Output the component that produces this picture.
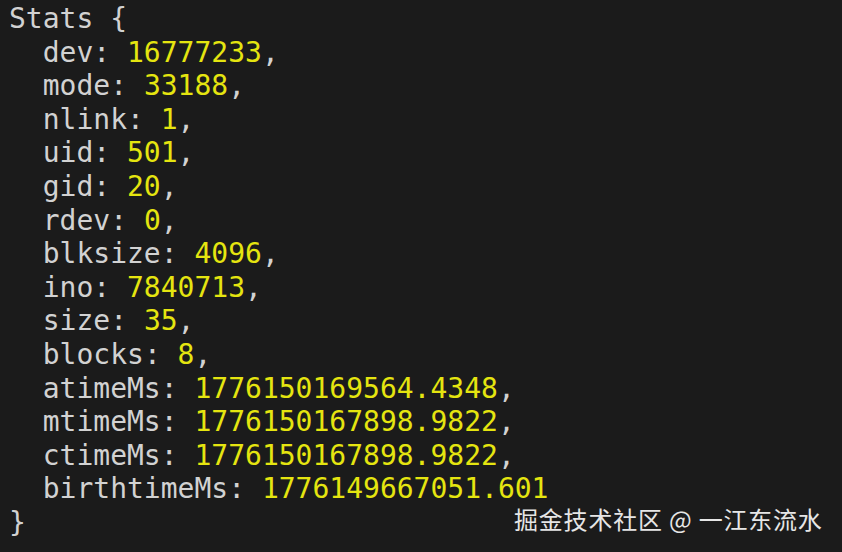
import React from 'react';

const fields: [string, string, boolean][] = [
    ['dev', '16777233', true],
    ['mode', '33188', true],
    ['nlink', '1', true],
    ['uid', '501', true],
    ['gid', '20', true],
    ['rdev', '0', true],
    ['blksize', '4096', true],
    ['ino', '7840713', true],
    ['size', '35', true],
    ['blocks', '8', true],
    ['atimeMs', '1776150169564.4348', true],
    ['mtimeMs', '1776150167898.9822', true],
    ['ctimeMs', '1776150167898.9822', true],
    ['birthtimeMs', '1776149667051.601', false]
];

const App = () => {
    return (
        <div className="relative w-[842px] h-[552px] overflow-hidden bg-[#1b1b1b] text-[#d2d2d2] text-[28px] leading-[33.6px] whitespace-pre pl-[9px] pt-[2px] font-['DejaVu_Sans_Mono','Liberation_Mono',monospace]">
            <div>Stats {'{'}</div>
            {fields.map(([key, value, comma]) => (
                <div key={key}>
                    {'  '}
                    {key}: <span className="text-[#e5e510]">{value}</span>
                    {comma ? ',' : ''}
                </div>
            ))}
            <div>{'}'}</div>

            <div className="absolute left-[514px] top-[504px] text-[24px] leading-[30px] text-[#e6e6e6] tracking-[0.8px] font-['Noto_Sans_CJK_SC','Noto_Sans',sans-serif]">
                掘金技术社区 @ 一江东流水
            </div>
        </div>
    );
};

export default App;
